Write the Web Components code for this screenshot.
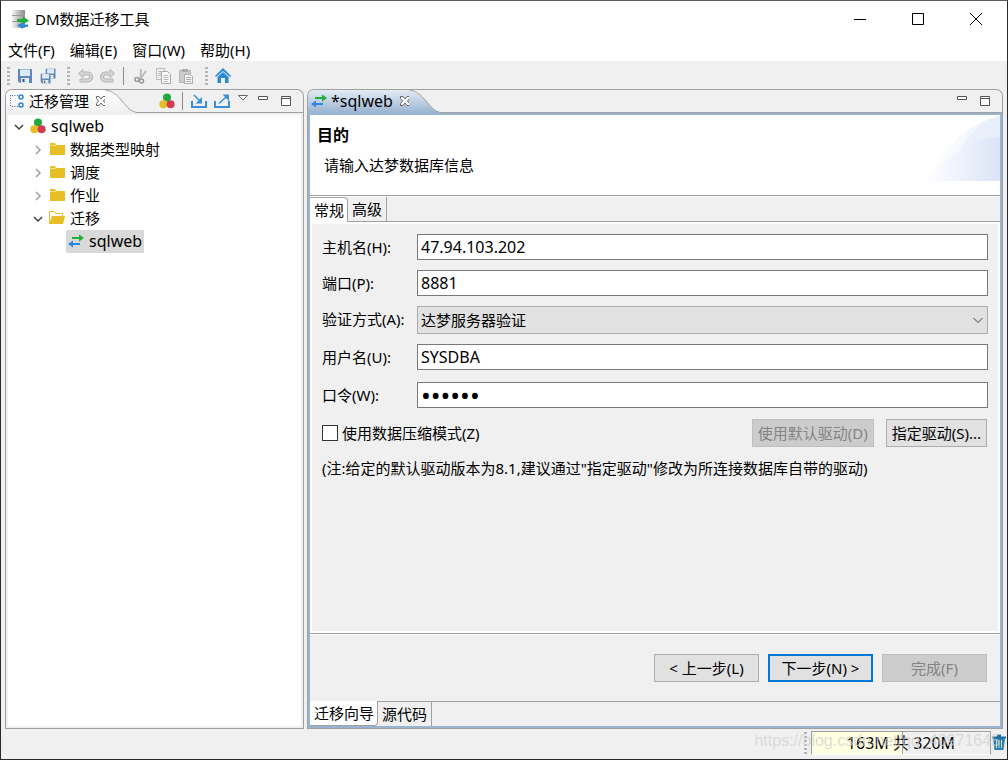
<!DOCTYPE html>
<html lang="zh-CN">
<head>
<meta charset="utf-8">
<title>DM数据迁移工具</title>
<style>
html, body { margin: 0; height: 100%; }
body { font: 15px/20px "Noto Sans", "Noto Sans CJK SC", sans-serif; color: #000; background: #1c1c20; }
</style>
</head>
<body>
<dm-app></dm-app>
<script>
const define = (name, html) => {
  const template = document.createElement('template');
  template.innerHTML = '<style>*{box-sizing:border-box}button{font:inherit;color:inherit;margin:0}</style>' + html;
  customElements.define(name, class extends HTMLElement {
    constructor() {
      super();
      this.attachShadow({ mode: 'open' }).append(template.content.cloneNode(true));
    }
  });
};

const balls = '<circle cx="8" cy="4.5" r="4" fill="#22a83a"/><circle cx="4.4" cy="11.3" r="4" fill="#e8bd22"/><circle cx="11.6" cy="11.3" r="4" fill="#d23c50"/>';
const arrows = '<path d="M4 4h7V1.500L16 5l-5 3.500V6H4z" fill="#22ac38"/><path d="M12 10H5V7.500L0 11l5 3.500V12h7z" fill="#2f86dc"/>';
const floppy = '<path d="M1 1h14v14H3l-2-2z" fill="#6085b8"/><path d="M3 1.500h10V8H3z" fill="#dfe9f6"/><path d="M4 10h8v5H4z" fill="#e8eef5"/><path d="M5.500 11h2v3h-2z" fill="#36547f"/>';
const icons = {
  app: '<defs><linearGradient id="m"><stop stop-color="#f4f4f4"/><stop offset="1" stop-color="#8a8a8a"/></linearGradient></defs><path d="M2 1h13v5H2zM2 7h13v5H2zM2 13h13v6H2z" fill="url(#m)"/><path d="M2 6.500h13M2 12.500h13" stroke="#999"/><path d="M7 10h6V7.500l6 4-6 4V13H7z" fill="#22ac38"/><path d="M18 15.500h-5V13l-6 3.500 6 3.500v-2h5z" fill="#2f86dc"/>',
  balls, arrows,
  save: floppy,
  saveall: '<g transform="translate(5 0) scale(.7)">' + floppy + '</g><g transform="translate(0 5) scale(.7)">' + floppy + '</g>',
  undo: '<path d="M6 1.500L1.500 5.500 6 9.500V7h4.500q2 0 2 2t-2 2H3v3h8q4.500-.5 4.500-5T11 4H6z" fill="#d4d4d4" stroke="#b4b4b4"/>',
  redo: '<path d="M10 1.500l4.500 4L10 9.500V7H5.500q-2 0-2 2t2 2H13v3H5Q.5 13.500.5 9T5 4h5z" fill="#d4d4d4" stroke="#b4b4b4"/>',
  cut: '<path d="M9 1l-.5 9M14 3l-6 8" stroke="#bbb" stroke-width="2" fill="none"/><circle cx="5" cy="11.500" r="2" fill="none" stroke="#999" stroke-width="1.500"/><circle cx="9.500" cy="13" r="2" fill="none" stroke="#999" stroke-width="1.500"/>',
  copy: '<path d="M1.500.5h8v11h-8z" fill="#eee" stroke="#bbb"/><path d="M6.500 3.500h6l3 3v9h-9z" fill="#f8f8f8" stroke="#aaa"/><path d="M3 3.500h4M3 5.500h3M3 7.500h3M8.500 7.500h5M8.500 9.500h5M8.500 11.500h5M8.500 13.500h4" stroke="#bbb"/>',
  paste: '<path d="M1.500 2.500h11v12h-11z" fill="#ccc" stroke="#b4b4b4"/><path d="M4 1h6v3H4z" fill="#aaa"/><path d="M6.500 6.500h6l2 2v7h-8z" fill="#f5f5f5" stroke="#aaa"/><path d="M8 9.500h5M8 11.500h5M8 13.500h5" stroke="#aaa"/>',
  home: '<path d="M8 0L0 8l1 1 7-6 7 6 1-1z" fill="#2b87d8"/><path d="M8 4l5.500 5v6H10v-5H6v5H2.500V9z" fill="#2b87d8"/>',
  outline: '<path d="M1.500 2v12M3 2.500h7M3 13.500h7" stroke="#3b6fae" stroke-dasharray="1 1.500" fill="none"/><circle cx="12" cy="4" r="2" fill="none" stroke="#2b87d8" stroke-width="1.500"/><circle cx="12" cy="12" r="2" fill="none" stroke="#2b87d8" stroke-width="1.500"/>',
  cross: '<path d="M3.500 3.500h2.500l2 2.500 2-2.500h2.500v2L10.500 8l2 2.500v2H10L8 10l-2 2.500H3.500v-2l2-2.500-2-2.500z" fill="#fff" stroke="#666"/>',
  import: '<path d="M1 8v6h14V8" fill="none" stroke="#3b8fd8" stroke-width="2"/><path d="M3 2l6 6" stroke="#3b8fd8" stroke-width="1.500"/><path d="M11 4v6.500H4.500z" fill="#3b8fd8"/>',
  export: '<path d="M1 8v6h14V8" fill="none" stroke="#3b8fd8" stroke-width="2"/><path d="M5 10.500L12 4" stroke="#3b8fd8" stroke-width="1.500"/><path d="M8.500 1.500H15V8z" fill="#3b8fd8"/>',
  triangle: '<path d="M3.500 2.500h9l-4.500 4.500z" fill="#fff" stroke="#666"/>',
  min: '<path d="M3.500 3.500h9v3h-9z" fill="#fff" stroke="#555"/>',
  max: '<path d="M3.500 3.500h9v9h-9zM3.500 5.500h9" fill="#fff" stroke="#555"/>',
  folder: '<path d="M1 2h5l1 2h9v10H1z" fill="#e7bf25"/><path d="M1 4.500h6" stroke="#f5df85"/>',
  open: '<path d="M.5 13.500v-12h5l1 2h7V6" fill="#fff" stroke="#e7bf25"/><path d="M3 6h13l-2 8H0z" fill="#e7bf25"/>',
  down: '<path d="M4 6L8 10 12 6" fill="none" stroke="#404040" stroke-width="1.500"/>',
  pick: '<path d="M3.500 6L8 10.500 12.500 6" fill="none" stroke="#404040"/>',
  right: '<path d="M6 4L10 8 6 12" fill="none" stroke="#a0a0a0" stroke-width="1.500"/>',
  trash: '<path d="M2 4h12l-1.500 12h-9z" fill="#2a7fae"/><path d="M1 3.500h14M6 1.500h4" stroke="#1f6d9a" stroke-width="2"/><path d="M5.500 6v8M8 6v8M10.500 6v8" stroke="#c8e4c0"/>',
  wmin: '<path d="M2 8.500h12" stroke="#000"/>',
  wmax: '<path d="M2.500 2.500h11v11h-11z" fill="none" stroke="#000"/>',
  wclose: '<path d="M2 2l12 12M14 2L2 14" stroke="#000"/>'
};
customElements.define('dm-icon', class extends HTMLElement {
  constructor() {
    super();
    this.attachShadow({ mode: 'open' });
  }
  connectedCallback() {
    const name = this.getAttribute('name');
    const box = name === 'app' ? 20 : 16;
    this.shadowRoot.innerHTML = `<style>:host{display:inline-flex;flex:none}svg{display:block}</style>
      <svg width="${box}" height="${box}" viewBox="0 0 ${box} ${box}" aria-hidden="true">${icons[name]}</svg>`;
  }
});

define('dm-title-bar', `<style>
  :host { display: flex; align-items: center; box-sizing: border-box; height: 37px; padding: 0 2px 1px 9px; background: #fff; }
  .name { flex: 1; padding-left: 5px; }
  button { width: 58px; height: 36px; border: 0; padding: 0; background: none; display: flex; align-items: center; justify-content: center; }
</style>
<dm-icon name="app"></dm-icon><span class="name"><slot></slot></span>
<button aria-label="最小化"><dm-icon name="wmin"></dm-icon></button>
<button aria-label="最大化"><dm-icon name="wmax"></dm-icon></button>
<button aria-label="关闭"><dm-icon name="wclose"></dm-icon></button>`);

define('dm-menu-bar', `<style>
  :host { display: block; background: #fff; }
  nav { display: flex; gap: 15px; padding: 2px 7px 1px; }
  button { border: 0; background: none; padding: 0; line-height: 20px; }
</style>
<nav><button>文件(F)</button><button>编辑(E)</button><button>窗口(W)</button><button>帮助(H)</button></nav>`);

define('dm-tool-group', `<style>
  :host { display: flex; align-items: center; }
  i { width: 3px; height: 18px; margin-right: 3px; background: repeating-linear-gradient(#b4b4b4 0 2px, transparent 2px 4px); }
</style><i></i><slot></slot>`);

define('dm-tool', `<style>
  :host { display: flex; }
  button { width: 23px; height: 22px; border: 0; padding: 0; background: none; display: flex; align-items: center; justify-content: center; }
</style><button><slot></slot></button>`);

define('dm-separator', `<style>:host { display: block; width: 1px; height: 18px; margin: 0 4px; background: #8c8c8c; }</style>`);

define('dm-tool-bar', `<style>:host { display: flex; gap: 8px; padding: 4px 6px 2px; }</style>
<dm-tool-group><dm-tool><dm-icon name="save"></dm-icon></dm-tool><dm-tool><dm-icon name="saveall"></dm-icon></dm-tool></dm-tool-group>
<dm-tool-group><dm-tool><dm-icon name="undo"></dm-icon></dm-tool><dm-tool><dm-icon name="redo"></dm-icon></dm-tool><dm-separator></dm-separator><dm-tool><dm-icon name="cut"></dm-icon></dm-tool><dm-tool><dm-icon name="copy"></dm-icon></dm-tool><dm-tool><dm-icon name="paste"></dm-icon></dm-tool></dm-tool-group>
<dm-tool-group><dm-tool><dm-icon name="home"></dm-icon></dm-tool></dm-tool-group>`);

define('dm-folder', `<style>
  :host { display: flex; flex-direction: column; min-width: 0; --top: #fff; --end: #f0f0f0; --frame: #f0f0f0; }
  :host([active]) { --top: #e4ebf4; --end: #99b4d1; --frame: #99b4d1; }
  header { display: flex; height: 24px; flex: none; border: 1px solid #a0a0a0; border-bottom: 0; border-radius: 7px 7px 0 0; overflow: hidden; }
  .tab { display: flex; align-items: center; gap: 4px; padding: 0 0 1px 3px; background: linear-gradient(var(--top), var(--end)); white-space: nowrap; }
  .curve { display: block; flex: none; width: 32px; height: 23px; margin-left: -4px; background: #f0f0f0; }
  .tools { flex: 1; display: flex; justify-content: flex-end; align-items: center; padding-right: 6px; border-bottom: 1px solid #a0a0a0; }
  .body { flex: 1; min-height: 0; display: flex; flex-direction: column; border: 2px solid var(--frame); outline: 1px solid #a0a0a0; margin: 0 1px 1px; clip-path: inset(0 -1px -1px -1px); background: #fff; }
</style>
<header><div class="tab"><slot name="tab"></slot></div>
<svg class="curve" viewBox="0 0 32 23" aria-hidden="true"><defs><linearGradient id="g" x2="0" y2="1"><stop stop-color="var(--top)"/><stop offset="1" stop-color="var(--end)"/></linearGradient></defs>
<path d="M0 0C8 1 12 5 17 11S26 22 32 22.500V23H0z" fill="url(#g)"/><path d="M0 0C8 1 12 5 17 11S26 22 32 22.500" fill="none" stroke="#a0a0a0"/></svg>
<div class="tools"><slot name="tools"></slot></div></header>
<div class="body"><slot></slot></div>`);

define('dm-tree', `<style>
  :host { display: block; }
  ul { list-style: none; margin: 0; padding: 0 0 0 19px; }
  ul.root { padding-left: 3px; }
  .row { display: flex; align-items: center; height: 23px; }
  .row > dm-icon { margin-right: 3px; }
  .item { display: flex; align-items: center; gap: 5px; height: 23px; padding: 0 2px 1px 0; }
  .leaf { margin-left: 17px; padding-left: 2px; background: #d9d9d9; }
  .latin { font-size: 16px; }
</style>
<ul class="root"><li><div class="row"><dm-icon name="down"></dm-icon><span class="item latin"><dm-icon name="balls"></dm-icon>sqlweb</span></div>
<ul>
<li class="row"><dm-icon name="right"></dm-icon><span class="item"><dm-icon name="folder"></dm-icon>数据类型映射</span></li>
<li class="row"><dm-icon name="right"></dm-icon><span class="item"><dm-icon name="folder"></dm-icon>调度</span></li>
<li class="row"><dm-icon name="right"></dm-icon><span class="item"><dm-icon name="folder"></dm-icon>作业</span></li>
<li><div class="row"><dm-icon name="down"></dm-icon><span class="item"><dm-icon name="open"></dm-icon>迁移</span></div>
<ul><li class="row"><span class="item leaf latin"><dm-icon name="arrows"></dm-icon>sqlweb</span></li></ul></li>
</ul></li></ul>`);

define('dm-banner', `<style>
  :host { display: block; position: relative; height: 80px; background: #fff; }
  h1 { margin: 0; font-size: 16px; line-height: 22px; padding: 9px 7px 0; }
  p { margin: 0; padding: 9px 14px 0; }
  svg { position: absolute; right: 0; top: 0; }
</style>
<svg width="76" height="66" viewBox="0 0 76 66" aria-hidden="true"><defs><linearGradient id="a"><stop stop-color="#fff"/><stop offset="1" stop-color="#ebf1fb"/></linearGradient><linearGradient id="b"><stop stop-color="#fff"/><stop offset="1" stop-color="#dbe3f6"/></linearGradient></defs>
<path d="M2 66C20 35 40 8 76 1v65z" fill="url(#a)"/><path d="M33 40C45 20 55 6 76 1v22Q52 26 33 40z" fill="#e4ecf9" opacity=".6"/><path d="M0 66C20 44 45 24 76 22v44z" fill="url(#b)"/></svg>
<h1>目的</h1><p>请输入达梦数据库信息</p>`);

define('dm-tabs', `<style>
  :host { display: flex; flex: none; height: 25px; background: #f0f0f0; }
  button { border: 0; border-right: 1px solid #a0a0a0; background: none; padding: 0 4px; line-height: 22px; }
  .on { background: #fff; padding-right: 3px; }
  i { flex: 1; }
  :host([edge=top]) .on { border-top: 1px solid #a0a0a0; border-radius: 0 4px 0 0; }
  :host([edge=top]) :is(.off, i) { border-bottom: 1px solid #a0a0a0; }
  :host([edge=bottom]) .on { border-bottom: 1px solid #a0a0a0; border-radius: 0 0 4px 0; }
  :host([edge=bottom]) :is(.off, i) { border-top: 1px solid #a0a0a0; }
</style>
<button class="on"><slot name="on"></slot></button><button class="off"><slot name="off"></slot></button><i></i>`);

define('dm-button', `<style>
  :host { display: block; }
  button { width: 100%; height: 28px; padding: 0 5px; border: 1px solid #adadad; background: #e1e1e1; white-space: nowrap; }
  :host([disabled]) button { color: #838383; background: #ccc; border-color: #bfbfbf; }
  :host([primary]) button { border: 2px solid #0078d7; }
</style><button><slot></slot></button>`);

define('dm-form', `<style>
  :host { display: block; flex: 1; min-height: 0; background: #f0f0f0; border: 2px solid #fff; padding: 10px 10px 0; }
  form { display: grid; grid-template-columns: 85px minmax(0, 1fr); gap: 10px; align-items: start; }
  label { line-height: 26px; white-space: nowrap; }
  input, select { font: 16px/20px "Noto Sans", "Noto Sans CJK SC", sans-serif; color: #000; width: 100%; height: 26px; margin: 0; padding: 0 3px; border: 1px solid #7a7a7a; border-radius: 0; background: #fff; }
  input[type=password] { font-size: 26px; }
  .pick { position: relative; height: 28px; }
  .pick dm-icon { position: absolute; right: 2px; top: 6px; pointer-events: none; }
  select { appearance: none; height: 28px; font-size: 15px; background: #e1e1e1; border-color: #adadad; }
  .tall { height: 28px; }
  .options { grid-column: 1 / 3; display: flex; align-items: center; gap: 12px; padding: 1px 1px 0 0; }
  .check { flex: 1; display: flex; align-items: center; gap: 4px; line-height: 28px; }
  .check input { appearance: none; width: 16px; height: 16px; padding: 0; border-color: #333; }
  p { grid-column: 1 / 3; margin: 1px 0 0; }
</style>
<form>
<label for="host">主机名(H):</label><input id="host" value="47.94.103.202">
<label for="port">端口(P):</label><input id="port" value="8881">
<label for="auth">验证方式(A):</label><div class="pick"><select id="auth"><option>达梦服务器验证</option></select><dm-icon name="pick"></dm-icon></div>
<label class="tall" for="user">用户名(U):</label><input id="user" value="SYSDBA">
<label for="pass">口令(W):</label><input id="pass" type="password" value="SYSDBA">
<div class="options"><label class="check"><input type="checkbox">使用数据压缩模式(Z)</label>
<dm-button disabled>使用默认驱动(D)</dm-button><dm-button>指定驱动(S)...</dm-button></div>
<p>(注:给定的默认驱动版本为8.1,建议通过"指定驱动"修改为所连接数据库自带的驱动)</p>
</form>`);

define('dm-wizard', `<style>
  :host { flex: 1; min-height: 0; display: flex; flex-direction: column; background: #f0f0f0; }
  hr { flex: none; margin: 0; height: 2px; border: 0; background: linear-gradient(#a0a0a0 50%, #fff 50%); }
  .actions { flex: none; display: flex; justify-content: flex-end; gap: 9px; padding: 19px 13px; }
  .actions dm-button { width: 105px; }
</style>
<dm-banner></dm-banner><hr>
<dm-tabs edge="top"><span slot="on">常规</span><span slot="off">高级</span></dm-tabs>
<dm-form></dm-form><hr>
<div class="actions"><dm-button>&lt; 上一步(L)</dm-button><dm-button primary>下一步(N) &gt;</dm-button><dm-button disabled>完成(F)</dm-button></div>
<dm-tabs edge="bottom"><span slot="on">迁移向导</span><span slot="off">源代码</span></dm-tabs>`);

define('dm-status-bar', `<style>
  :host { position: relative; flex: none; display: flex; justify-content: flex-end; box-sizing: border-box; height: 30px; padding: 2px 0 4px; }
  .grip { width: 3px; margin: 1px 4px 0 0; background: repeating-linear-gradient(#b4b4b4 0 2px, transparent 2px 4px); }
  .heap { display: flex; align-items: center; justify-content: center; width: 180px; font-size: 16px; border: 1px solid #a0a0a0; border-bottom-color: #fff; background: linear-gradient(90deg, #ffffe1 90px, #a0a0a0 90px 91px, #f0f0f0 91px); }
  dm-icon { margin-top: 3px; }
  .mark { position: absolute; right: 7px; top: 2px; font: 16px/20px "Liberation Sans", sans-serif; color: #d0d0d0; opacity: .7; }
</style>
<span class="grip"></span><span class="heap">163M 共 320M</span><dm-icon name="trash"></dm-icon>
<span class="mark">https://blog.csdn.net/qq_40971645</span>`);

define('dm-app', `<style>
  :host { display: flex; flex-direction: column; min-height: 100vh; border: 1px solid #2a2a2e; border-top-color: #5c5c62; background: #f0f0f0; box-sizing: border-box; }
  main { flex: 1; display: grid; grid-template-columns: minmax(0, 299fr) minmax(0, 696fr); gap: 3px; padding: 0 4px; }
  .latin { font-size: 16px; }
  .menu { margin-left: 2px; }
</style>
<dm-title-bar>DM数据迁移工具</dm-title-bar>
<dm-menu-bar></dm-menu-bar>
<dm-tool-bar></dm-tool-bar>
<main>
<dm-folder><dm-icon slot="tab" name="outline"></dm-icon><span slot="tab">迁移管理</span><dm-icon slot="tab" name="cross"></dm-icon>
<dm-tool slot="tools"><dm-icon name="balls"></dm-icon></dm-tool><dm-separator slot="tools"></dm-separator><dm-tool slot="tools"><dm-icon name="import"></dm-icon></dm-tool><dm-tool slot="tools"><dm-icon name="export"></dm-icon></dm-tool><dm-icon class="menu" slot="tools" name="triangle"></dm-icon><dm-tool slot="tools"><dm-icon name="min"></dm-icon></dm-tool><dm-tool slot="tools"><dm-icon name="max"></dm-icon></dm-tool>
<dm-tree></dm-tree></dm-folder>
<dm-folder active><dm-icon slot="tab" name="arrows"></dm-icon><span slot="tab" class="latin">*sqlweb</span><dm-icon slot="tab" name="cross"></dm-icon>
<dm-tool slot="tools"><dm-icon name="min"></dm-icon></dm-tool><dm-tool slot="tools"><dm-icon name="max"></dm-icon></dm-tool>
<dm-wizard></dm-wizard></dm-folder>
</main>
<dm-status-bar></dm-status-bar>`);
</script>
</body>
</html>
